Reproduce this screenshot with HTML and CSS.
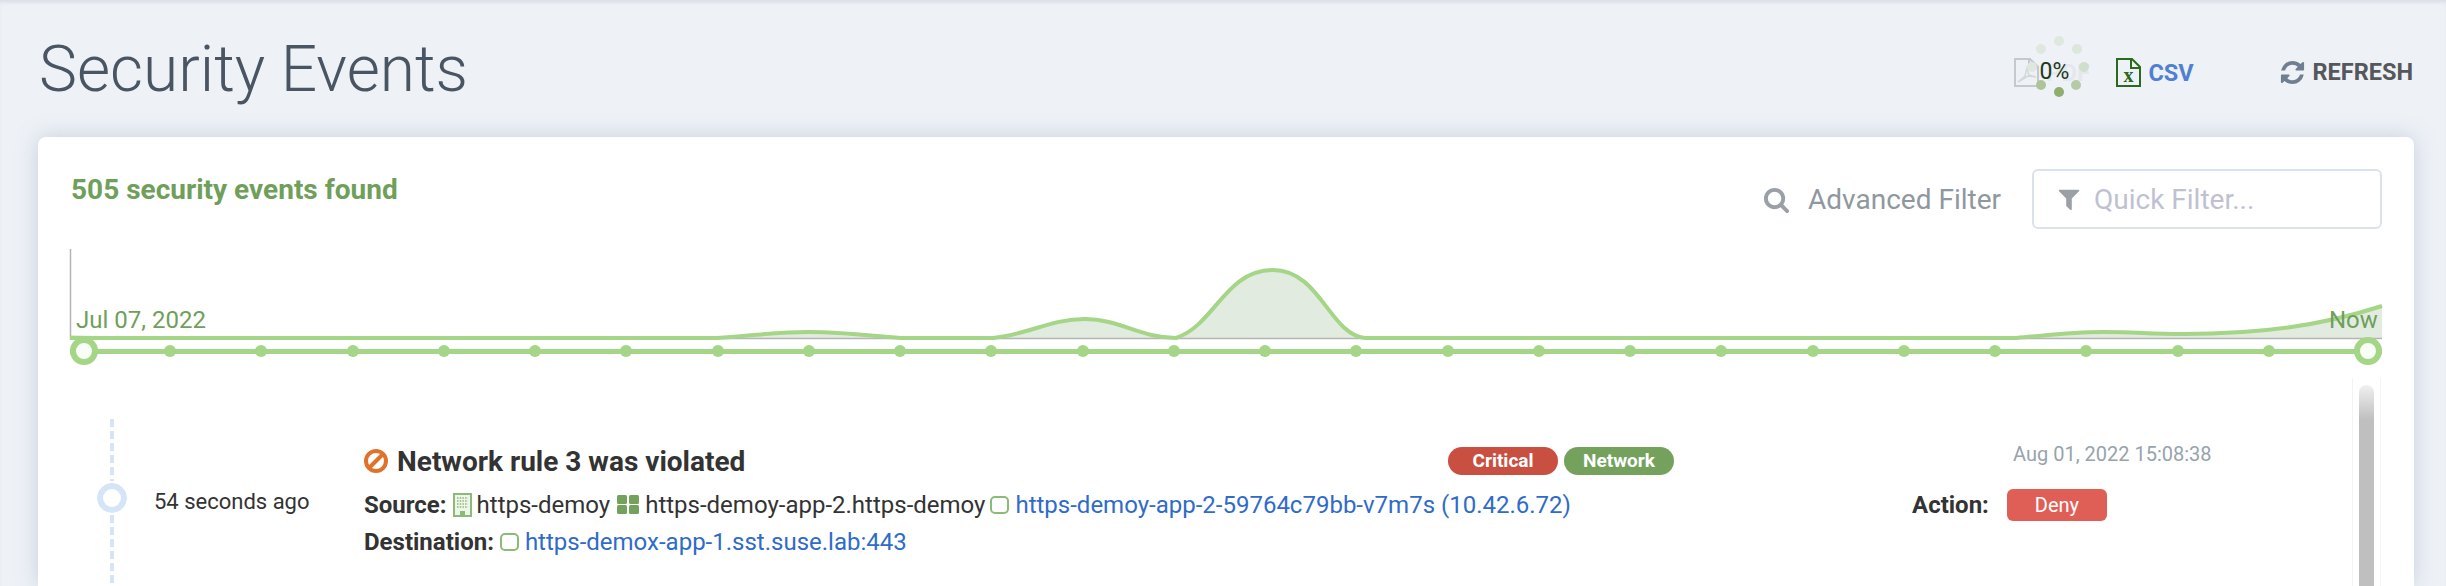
FILE: index.html
```html
<!DOCTYPE html>
<html lang="en">
<head>
    <meta charset="UTF-8">
    <title>Security Events</title>
    <link rel="stylesheet" href="styles.css">
</head>
<body>

<main class="page">
    <header class="head">
        <h1 class="title">Security Events</h1>
        <div class="tools">
            <div class="export export-pdf">
                <svg class="file-icon" viewBox="0 0 25 29">
                    <path d="M1 1h15l8 8v19H1z" fill="none" stroke="#c3c9cd" stroke-width="2"/>
                    <path d="M15 1v9h9" fill="none" stroke="#c3c9cd" stroke-width="2"/>
                    <path d="M4 24l7-6 2-8 2 7 7 2-8-1z" fill="none" stroke="#d4d8da" stroke-width="1.5"/>
                </svg>
                <span class="export-faded">PDF</span>
                <div class="loader">
                    <svg viewBox="0 0 70 70">
                        <circle cx="35" cy="9" r="5" fill="#dfe8de"/>
                        <circle cx="53" cy="17" r="5" fill="#dce6da"/>
                        <circle cx="60" cy="35" r="5" fill="#cfdfca"/>
                        <circle cx="52" cy="53" r="5" fill="#b5cba3"/>
                        <circle cx="35" cy="60" r="5" fill="#8fad6b"/>
                        <circle cx="17" cy="53" r="5" fill="#aec498"/>
                        <circle cx="8" cy="35" r="5" fill="#dfe8de"/>
                        <circle cx="17" cy="17" r="5" fill="#dfe8de"/>
                    </svg>
                    <span class="loader-text">0%</span>
                </div>
            </div>
            <div class="export export-csv">
                <svg class="file-icon" viewBox="0 0 25 29">
                    <path d="M1 1h15l8 8v19H1z" fill="none" stroke="#2b6a1e" stroke-width="2"/>
                    <path d="M15 1v9h9" fill="none" stroke="#2b6a1e" stroke-width="2"/>
                    <text x="12.5" y="24" class="file-x">x</text>
                </svg>
                <span class="export-link">CSV</span>
            </div>
            <div class="refresh">
                <svg class="refresh-icon" viewBox="0 0 1792 1792">
                    <path d="M1639 1056q0 5-1 7-64 268-268 434.5t-478 166.5q-146 0-282.5-55t-243.5-157l-129 129q-19 19-45 19t-45-19-19-45v-448q0-26 19-45t45-19h448q26 0 45 19t19 45-19 45l-137 137q71 66 161 102t187 36q134 0 250-65t186-179q11-17 53-117 8-23 30-23h192q13 0 22.5 9.5t9.5 22.5zm25-800v448q0 26-19 45t-45 19h-448q-26 0-45-19t-19-45 19-45l138-138q-148-137-349-137-134 0-250 65t-186 179q-11 17-53 117-8 23-30 23h-199q-13 0-22.5-9.5t-9.5-22.5v-7q65-268 270-434.5t480-166.5q146 0 284 55.5t245 156.5l130-129q19-19 45-19t45 19 19 45z"/>
                </svg>
                <span>REFRESH</span>
            </div>
        </div>
    </header>

    <section class="card">
        <div class="toolbar">
            <div class="found">505 security events found</div>
            <div class="filters">
                <svg class="search-icon" viewBox="0 0 1792 1792">
                    <path d="M1216 832q0-185-131.5-316.5t-316.5-131.5-316.5 131.5-131.5 316.5 131.5 316.5 316.5 131.5 316.5-131.5 131.5-316.5zm512 832q0 52-38 90t-90 38q-54 0-90-38l-343-342q-179 124-399 124-143 0-273.5-55.5t-225-150-150-225-55.5-273.5 55.5-273.5 150-225 225-150 273.5-55.5 273.5 55.5 225 150 150 225 55.5 273.5q0 220-124 399l343 343q37 37 37 90z"/>
                </svg>
                <span class="advanced">Advanced Filter</span>
                <div class="quick">
                    <svg class="filter-icon" viewBox="0 0 1792 1792">
                        <path d="M1595 295q17 41-14 70l-493 493v742q0 42-39 59-13 5-25 5-27 0-45-19l-256-256q-19-19-19-45v-486l-493-493q-31-29-14-70 17-39 59-39h1280q42 0 59 39z"/>
                    </svg>
                    <span>Quick Filter...</span>
                </div>
            </div>
        </div>

        <svg class="chart" viewBox="70 249 2312 88">
            <path class="chart-fill" d="M70 335L157 338H717C750 336 775 332 809 332C845 332 870 336 901 338H993C1030 334 1050 319 1085 319C1120 319 1140 338 1176 338C1215 325 1225 270 1273 270C1320 270 1330 335 1365 338H2016C2050 335 2070 332 2104 332C2135 332 2150 334 2183 334C2260 334 2320 326 2382 306V338H70z"/>
            <path class="chart-axis" d="M70.5 249V338.5H2382"/>
            <path class="chart-line" d="M70 338H717C750 336 775 332 809 332C845 332 870 336 901 338H993C1030 334 1050 319 1085 319C1120 319 1140 338 1176 338C1215 325 1225 270 1273 270C1320 270 1330 335 1365 338H2016C2050 335 2070 332 2104 332C2135 332 2150 334 2183 334C2260 334 2320 326 2382 306"/>
            <text class="chart-label" x="76" y="328">Jul 07, 2022</text>
            <text class="chart-label" x="2329" y="328">Now</text>
        </svg>

        <div class="slider">
            <span class="knob"></span>
            <div class="ticks">
                <i></i><i></i><i></i><i></i><i></i><i></i><i></i><i></i>
                <i></i><i></i><i></i><i></i><i></i><i></i><i></i><i></i>
                <i></i><i></i><i></i><i></i><i></i><i></i><i></i><i></i>
            </div>
            <span class="knob"></span>
        </div>

        <div class="events">
            <div class="list">
                <article class="event">
                    <div class="rail"><span class="rail-dot"></span></div>
                    <div class="ago">54 seconds ago</div>
                    <div class="detail">
                        <div class="event-head">
                            <h2 class="event-title">
                                <svg class="ban-icon" viewBox="0 0 24 24">
                                    <circle cx="12" cy="12" r="10" fill="none" stroke="#e0732c" stroke-width="4"/>
                                    <path d="M5 19L19 5" stroke="#e0732c" stroke-width="4"/>
                                </svg>
                                Network rule 3 was violated
                            </h2>
                            <div class="badges">
                                <span class="badge badge-critical">Critical</span>
                                <span class="badge badge-network">Network</span>
                            </div>
                        </div>
                        <div class="row">
                            <b>Source:</b>
                            <svg class="ns-icon" viewBox="0 0 19 24">
                                <rect x="1" y="1" width="17" height="22" fill="#eef5ea" stroke="#8bbb76" stroke-width="2"/>
                                <path d="M4 5h11M4 8h11M4 11h11M4 14h11" stroke="#8bbb76" stroke-width="1.5" stroke-dasharray="1.5 1.2"/>
                                <rect x="7" y="18" width="5" height="5" fill="#8bbb76"/>
                            </svg>
                            <span>https-demoy</span>
                            <svg class="grid-icon" viewBox="0 0 22 19">
                                <rect width="10" height="9" rx="1.5"/>
                                <rect x="12" width="10" height="9" rx="1.5"/>
                                <rect y="10" width="10" height="9" rx="1.5"/>
                                <rect x="12" y="10" width="10" height="9" rx="1.5"/>
                            </svg>
                            <span>https-demoy-app-2.https-demoy</span>
                            <span class="pod"></span>
                            <a class="link">https-demoy-app-2-59764c79bb-v7m7s (10.42.6.72)</a>
                        </div>
                        <div class="row">
                            <b>Destination:</b>
                            <span class="pod"></span>
                            <a class="link">https-demox-app-1.sst.suse.lab:443</a>
                        </div>
                    </div>
                    <div class="side">
                        <div class="stamp">Aug 01, 2022 15:08:38</div>
                        <div class="action">
                            <b>Action:</b>
                            <span class="deny">Deny</span>
                        </div>
                    </div>
                </article>
            </div>
            <div class="scroll"><div class="scroll-thumb"></div></div>
        </div>
    </section>
</main>

</body>
</html>
```

FILE: styles.css
```css
html, body {
    height: 100%;
}

body {
    margin: 0;
    overflow: hidden;
    background-color: #eef2f7;
    font-family: Roboto, sans-serif;
    color: #333;
}

.page {
    height: 586px;
    padding: 0 32px 0 38px;
    box-sizing: border-box;
    box-shadow: inset 0 4px 4px -2px rgba(120, 130, 150, 0.2);
}

/* header */
.head {
    display: flex;
    justify-content: space-between;
    height: 137px;
}

.title {
    margin: 30px 0 0 1px;
    font-size: 64px;
    font-weight: 300;
    line-height: 80px;
    color: #4a5563;
}

.tools {
    display: flex;
    align-items: flex-start;
    padding-top: 58px;
    padding-right: 1px;
    font-size: 23.5px;
    font-weight: 700;
    line-height: 28px;
}

.export {
    display: flex;
    align-items: center;
}

.export-pdf {
    position: relative;
    width: 102px;
}

.export-csv {
    width: 163px;
}

.file-icon {
    width: 25px;
    height: 29px;
    flex: none;
}

.file-x {
    font-family: "Liberation Serif", serif;
    font-size: 20px;
    font-weight: 700;
    fill: #2b6a1e;
    text-anchor: middle;
}

.export-faded {
    margin-left: 7px;
    color: #e4e8ec;
}

.export-link {
    margin-left: 7px;
    color: #4f81d0;
}

.loader {
    position: absolute;
    left: 10px;
    top: -26px;
    width: 70px;
    height: 70px;
}

.loader svg {
    display: block;
}

.loader-text {
    position: absolute;
    left: 15px;
    top: 26px;
    font-size: 23px;
    font-weight: 400;
    color: #1d3a1a;
}

.refresh {
    display: flex;
    align-items: center;
    color: #55575c;
}

.refresh-icon {
    width: 27px;
    height: 27px;
    margin-right: 6px;
    fill: #6f7f90;
}

/* card */
.card {
    height: 449px;
    background-color: #fff;
    border-radius: 8px 8px 0 0;
    box-shadow: 0 0 22px rgba(125, 140, 170, 0.35);
}

.toolbar {
    display: flex;
    justify-content: space-between;
    align-items: flex-start;
    height: 112px;
    padding: 32px 32px 0 33px;
    box-sizing: border-box;
}

.found {
    margin-top: 5px;
    font-size: 28px;
    font-weight: 700;
    line-height: 32px;
    color: #6f9f5a;
}

.filters {
    display: flex;
    align-items: center;
    height: 60px;
}

.search-icon {
    width: 27px;
    height: 27px;
    fill: #9b9fa6;
}

.advanced {
    margin-left: 18px;
    font-size: 28px;
    color: #8f979f;
}

.quick {
    display: flex;
    align-items: center;
    width: 350px;
    height: 60px;
    margin-left: 31px;
    padding-left: 22px;
    box-sizing: border-box;
    border: 2px solid #dae3ec;
    border-radius: 6px;
    font-size: 28px;
    color: #bfc1d1;
}

.filter-icon {
    width: 26px;
    height: 26px;
    margin-right: 12px;
    fill: #9b9fa6;
}

/* chart */
.chart {
    display: block;
    width: 2312px;
    height: 88px;
    margin-left: 32px;
    overflow: visible;
}

.chart-fill {
    fill: #e2ebdf;
}

.chart-axis {
    fill: none;
    stroke: #b5b5b5;
    stroke-width: 1.5;
}

.chart-line {
    fill: none;
    stroke: #a5d586;
    stroke-width: 4;
}

.chart-label {
    font-size: 24px;
    fill: #6f9f5a;
}

.slider {
    display: flex;
    align-items: center;
    width: 2312px;
    height: 28px;
    margin-left: 32px;
    background: linear-gradient(#a5d586, #a5d586) center / 100% 5px no-repeat;
}

.knob {
    flex: none;
    width: 28px;
    height: 28px;
    box-sizing: border-box;
    border: 6px solid #a5d586;
    border-radius: 50%;
    background-color: #f8fdf6;
}

.ticks {
    display: flex;
    flex: 1;
    justify-content: space-between;
    padding: 0 79px 0 66px;
}

.ticks i {
    width: 12px;
    height: 12px;
    border-radius: 50%;
    background-color: #a5d586;
}

/* events */
.events {
    display: flex;
    margin-top: 13px;
    height: 208px;
}

.list {
    flex: 1;
    overflow: hidden;
}

.event {
    display: flex;
    padding: 41px 0 0 72px;
}

.rail {
    display: flex;
    justify-content: center;
    align-items: center;
    width: 4px;
    height: 164px;
    padding-bottom: 6px;
    box-sizing: border-box;
    background: repeating-linear-gradient(#d5e4f7 0 8px, transparent 8px 12px);
}

.rail-dot {
    flex: none;
    width: 30px;
    height: 30px;
    box-sizing: border-box;
    border: 6px solid #d5e4f7;
    border-radius: 50%;
    background-color: #fff;
    outline: 2px solid #fff;
}

.ago {
    width: 210px;
    margin: 68px 0 0 40px;
    font-size: 22px;
    line-height: 30px;
}

.detail {
    width: 1310px;
    padding-top: 26px;
}

.event-head {
    display: flex;
    justify-content: space-between;
    align-items: center;
    height: 32px;
    margin-bottom: 9px;
}

.event-title {
    display: flex;
    align-items: center;
    margin: 0;
    font-size: 28px;
    font-weight: 700;
}

.ban-icon {
    width: 24px;
    height: 24px;
    margin-right: 9px;
}

.badges {
    display: flex;
    gap: 6px;
}

.badge {
    width: 110px;
    height: 28px;
    border-radius: 14px;
    color: #fff;
    font-size: 19px;
    font-weight: 700;
    line-height: 28px;
    text-align: center;
}

.badge-critical {
    background-color: #c94f40;
}

.badge-network {
    background-color: #74a25d;
}

.row {
    display: flex;
    align-items: center;
    height: 37px;
    font-size: 24px;
    white-space: nowrap;
}

.row b {
    margin-right: 6px;
}

.ns-icon {
    width: 19px;
    height: 24px;
    margin-right: 5px;
}

.grid-icon {
    width: 22px;
    height: 19px;
    margin: 0 6px 0 7px;
    fill: #74a25d;
}

.pod {
    flex: none;
    width: 19px;
    height: 18px;
    margin: 0 6px 0 5px;
    box-sizing: border-box;
    border: 2px solid #8bbb76;
    border-radius: 5px;
}

.row b + .pod {
    margin-left: 0;
}

.link {
    color: #2f6bc9;
}

.side {
    width: 400px;
    margin-left: 238px;
    padding-top: 23px;
}

.stamp {
    margin-left: 101px;
    font-size: 20px;
    line-height: 24px;
    color: #97a3ae;
}

.action {
    display: flex;
    align-items: center;
    margin-top: 23px;
    font-size: 24px;
}

.deny {
    width: 100px;
    height: 32px;
    margin-left: 18px;
    border-radius: 6px;
    background-color: #df5f57;
    color: #fff;
    font-size: 20px;
    line-height: 32px;
    text-align: center;
}

.scroll {
    flex: none;
    width: 29px;
    height: 208px;
    margin-right: 33px;
    padding: 7px 6px 0;
    box-sizing: border-box;
    border-left: 1px solid #f3f3f3;
    border-right: 1px solid #f3f3f3;
}

.scroll-thumb {
    height: 100%;
    border-radius: 8px 8px 0 0;
    background: linear-gradient(#f0f0f0, #bfbfbf 35px);
}
```
